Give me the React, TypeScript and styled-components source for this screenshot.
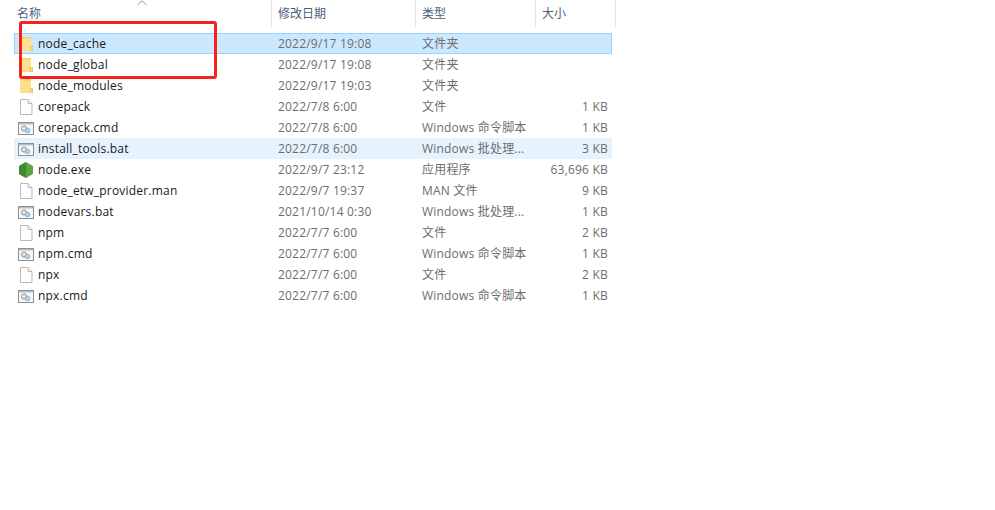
import React from 'react';
import styled, { createGlobalStyle } from 'styled-components';

const GlobalStyle = createGlobalStyle`
  html, body {
    margin: 0;
    padding: 0;
    background: #fff;
  }
`;

const FONT = `"Open Sans", "Noto Sans", "Noto Sans CJK SC", sans-serif`;

const Page = styled.div`
  position: relative;
  width: 995px;
  height: 510px;
  overflow: hidden;
  background: #fff;
  font-family: ${FONT};
  font-size: 12px;
`;

const Header = styled.div`
  display: grid;
  grid-template-columns: 272px 144px 120px 80px;
  height: 27px;
  margin-bottom: 6px;
`;

const HeaderCell = styled.div<{ $first?: boolean }>`
  position: relative;
  display: flex;
  align-items: center;
  box-sizing: border-box;
  padding-left: ${(p) => (p.$first ? '17px' : '6px')};
  padding-bottom: 2px;
  border-right: 1px solid #e5e5e5;
  color: #4c607a;
`;

const SortArrow = styled.svg`
  position: absolute;
  left: 137px;
  top: 0;
`;

const List = styled.div`
  display: flex;
  flex-direction: column;
  width: 598px;
  margin-left: 14px;
`;

const Row = styled.div<{ $state?: 'selected' | 'hover' }>`
  display: grid;
  grid-template-columns: 257px 144px 120px 77px;
  grid-template-rows: 19px;
  align-items: center;
  box-sizing: border-box;
  height: 21px;
  border: 1px solid ${(p) => (p.$state === 'selected' ? '#99d1ff' : 'transparent')};
  background: ${(p) =>
    p.$state === 'selected' ? '#cce8ff' : p.$state === 'hover' ? '#e5f3ff' : 'transparent'};
  letter-spacing: 0.2px;
`;

const NameCell = styled.div`
  display: flex;
  align-items: center;
  gap: 4px;
  padding-left: 3px;
  color: #1a1a1a;
  white-space: nowrap;
`;

const IconBox = styled.span`
  display: flex;
  flex: none;
  width: 16px;
  height: 16px;
`;

const Cell = styled.div`
  color: #6d6d6d;
  white-space: nowrap;
  padding-left: 6px;
`;

const TypeCell = styled(Cell)`
  padding-bottom: 2px;
`;

const SizeCell = styled(Cell)`
  padding-left: 0;
  padding-right: 5px;
  text-align: right;
`;

const Highlight = styled.div`
  position: absolute;
  left: 19px;
  top: 21px;
  width: 198px;
  height: 58px;
  box-sizing: border-box;
  border: 3px solid #f5211c;
  border-radius: 3px;
`;

const FolderIcon = () => (
  <svg width="16" height="16" viewBox="0 0 16 16">
    <path d="M2 1h11v14H2z" fill="#fde08c" />
    <path d="M2 1h11v1.5H2z" fill="#f5cf70" />
    <path d="M12 10h3v5h-3z" fill="#f2c35c" />
    <path d="M13 11h1.2v3H13z" fill="#fde08c" />
  </svg>
);

const FileIcon = () => (
  <svg width="16" height="16" viewBox="0 0 16 16">
    <path d="M2.5 0.5h7.5l4 4v11H2.5z" fill="#fdfdfd" stroke="#b9b9b9" />
    <path d="M10 0.5v4h4" fill="#f0f0f0" stroke="#b9b9b9" />
  </svg>
);

const ScriptIcon = () => (
  <svg width="16" height="16" viewBox="0 0 16 16">
    <rect x="0.5" y="2.5" width="15" height="12" fill="#f7f7f7" stroke="#8f8f8f" />
    <rect x="1" y="3" width="14" height="1.5" fill="#bdbdbd" />
    <circle cx="6" cy="8.5" r="2.6" fill="#d4d4d4" stroke="#999" />
    <circle cx="6" cy="8.5" r="0.9" fill="#fff" />
    <circle cx="9.5" cy="10.5" r="2.2" fill="#b5d8f0" stroke="#7fb0d2" />
  </svg>
);

const NodeIcon = () => (
  <svg width="16" height="16" viewBox="0 0 16 16">
    <path d="M8 0l7 4v8l-7 4-7-4V4z" fill="#5aa63f" />
    <path d="M8 0v16l-7-4V4z" fill="#3f8a32" />
  </svg>
);

type FileKind = 'folder' | 'file' | 'script' | 'node';

const ICONS: Record<FileKind, React.FC> = {
  folder: FolderIcon,
  file: FileIcon,
  script: ScriptIcon,
  node: NodeIcon,
};

type Entry = {
  name: string;
  date: string;
  type: string;
  size: string;
  kind: FileKind;
  state?: 'selected' | 'hover';
};

const ENTRIES: Entry[] = [
  { name: 'node_cache', date: '2022/9/17 19:08', type: '文件夹', size: '', kind: 'folder', state: 'selected' },
  { name: 'node_global', date: '2022/9/17 19:08', type: '文件夹', size: '', kind: 'folder' },
  { name: 'node_modules', date: '2022/9/17 19:03', type: '文件夹', size: '', kind: 'folder' },
  { name: 'corepack', date: '2022/7/8 6:00', type: '文件', size: '1 KB', kind: 'file' },
  { name: 'corepack.cmd', date: '2022/7/8 6:00', type: 'Windows 命令脚本', size: '1 KB', kind: 'script' },
  { name: 'install_tools.bat', date: '2022/7/8 6:00', type: 'Windows 批处理...', size: '3 KB', kind: 'script', state: 'hover' },
  { name: 'node.exe', date: '2022/9/7 23:12', type: '应用程序', size: '63,696 KB', kind: 'node' },
  { name: 'node_etw_provider.man', date: '2022/9/7 19:37', type: 'MAN 文件', size: '9 KB', kind: 'file' },
  { name: 'nodevars.bat', date: '2021/10/14 0:30', type: 'Windows 批处理...', size: '1 KB', kind: 'script' },
  { name: 'npm', date: '2022/7/7 6:00', type: '文件', size: '2 KB', kind: 'file' },
  { name: 'npm.cmd', date: '2022/7/7 6:00', type: 'Windows 命令脚本', size: '1 KB', kind: 'script' },
  { name: 'npx', date: '2022/7/7 6:00', type: '文件', size: '2 KB', kind: 'file' },
  { name: 'npx.cmd', date: '2022/7/7 6:00', type: 'Windows 命令脚本', size: '1 KB', kind: 'script' },
];

const App = () => (
  <Page>
    <GlobalStyle />
    <Header>
      <HeaderCell $first>
        名称
        <SortArrow width="10" height="6" viewBox="0 0 10 6">
          <path d="M0.5 5L5 0.8 9.5 5" fill="none" stroke="#9a9a9a" />
        </SortArrow>
      </HeaderCell>
      <HeaderCell>修改日期</HeaderCell>
      <HeaderCell>类型</HeaderCell>
      <HeaderCell>大小</HeaderCell>
    </Header>
    <List>
      {ENTRIES.map((entry) => {
        const Icon = ICONS[entry.kind];
        return (
          <Row key={entry.name} $state={entry.state}>
            <NameCell>
              <IconBox>
                <Icon />
              </IconBox>
              {entry.name}
            </NameCell>
            <Cell>{entry.date}</Cell>
            <TypeCell>{entry.type}</TypeCell>
            <SizeCell>{entry.size}</SizeCell>
          </Row>
        );
      })}
    </List>
    <Highlight />
  </Page>
);

export default App;
